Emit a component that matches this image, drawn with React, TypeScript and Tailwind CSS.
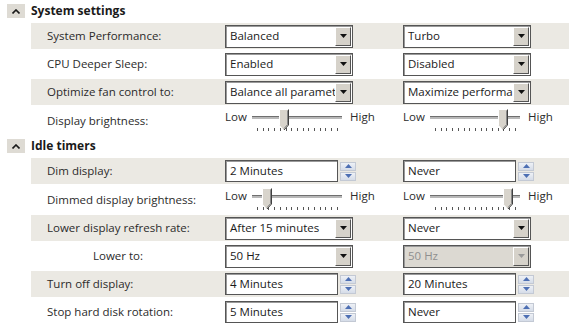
import type { ReactNode } from "react";

// Panel de energia estilo Windows clássico: duas colunas de valores por linha.

function Caret() {
  return (
    <div className="w-[18px] h-[14px] bg-[#dedbd4] flex items-center justify-center">
      <svg width="8" height="5" viewBox="0 0 8 5">
        <path d="M0.5 4.5 L4 1 L7.5 4.5" fill="none" stroke="#1a1a1a" strokeWidth="1.6" />
      </svg>
    </div>
  );
}

function Header({ title }: { title: string }) {
  return (
    <div className="h-[22px] flex items-center pl-[7px] gap-[6px]">
      <Caret />
      <span className="font-bold text-[12px] text-[#1a1a1a]">{title}</span>
    </div>
  );
}

function Row({
  label,
  grey,
  indent,
  tall,
  children,
}: {
  label: string;
  grey?: boolean;
  indent?: boolean;
  tall?: boolean;
  children: ReactNode;
}) {
  return (
    <div className={`ml-[31px] flex ${tall ? "h-[29px] items-start" : "h-[28px] items-center"}`}>
      <div
        className={`flex w-full items-center ${tall ? "h-[29px]" : "h-[26px]"} ${
          grey ? "bg-[#ebe9e3]" : ""
        }`}
      >
        <div
          className={`w-[194px] shrink-0 text-[#2b2b2b] ${indent ? "pl-[62px]" : "pl-[16px]"} ${
            tall ? "pt-[1px]" : ""
          }`}
        >
          {label}
        </div>
        {children}
      </div>
    </div>
  );
}

function Cell({ children }: { children: ReactNode }) {
  return <div className="w-[178px] shrink-0">{children}</div>;
}

function Select({ value, disabled }: { value: string; disabled?: boolean }) {
  return (
    <div
      className={`w-[128px] h-[23px] flex items-center border border-[#555] shadow-[inset_1px_1px_0_#9a9a9a] ${
        disabled ? "bg-[#dcd9d2] text-[#8f8f8f]" : "bg-white text-[#1a1a1a]"
      }`}
    >
      <span className="flex-1 min-w-0 pl-[4px] whitespace-nowrap overflow-hidden">{value}</span>
      <div className="w-[16px] h-[19px] shrink-0 mr-[1px] bg-[#d6d2ca] border border-t-white border-l-white border-b-[#555] border-r-[#555] flex items-center justify-center">
        <svg width="7" height="4" viewBox="0 0 7 4">
          <path d="M0 0 H7 L3.5 4 Z" fill={disabled ? "#9a9a9a" : "#111"} />
        </svg>
      </div>
    </div>
  );
}

function SpinArrow({ up }: { up?: boolean }) {
  return (
    <div className="w-[16px] h-[9px] bg-gradient-to-b from-[#eef1f6] to-[#d5dce8] border border-[#c3c9d4] flex items-center justify-center">
      <svg width="7" height="4" viewBox="0 0 7 4">
        <path d={up ? "M0 4 H7 L3.5 0 Z" : "M0 0 H7 L3.5 4 Z"} fill="#4d6fb3" />
      </svg>
    </div>
  );
}

function Spin({ value }: { value: string }) {
  return (
    <div className="flex items-center gap-[2px]">
      <div className="w-[113px] h-[22px] flex items-center bg-white border border-[#555] shadow-[inset_1px_1px_0_#9a9a9a] pl-[4px] text-[#1a1a1a] whitespace-nowrap">
        {value}
      </div>
      <div className="flex flex-col gap-[1px]">
        <SpinArrow up />
        <SpinArrow />
      </div>
    </div>
  );
}

function Thumb() {
  return (
    <svg width="11" height="22" viewBox="0 0 11 22">
      <path d="M0.5 0.5 H9.5 V16 L5 21 L0.5 16 Z" fill="#d8d4cc" />
      <path d="M0.5 16 V0.5 H9.5" fill="none" stroke="#fff" />
      <path d="M9.5 0.5 V16 L5 21" fill="none" stroke="#404040" />
      <path d="M8.5 1.5 V15.5 L5 19.5" fill="none" stroke="#8a8a8a" />
    </svg>
  );
}

function Slider({ pos }: { pos: number }) {
  return (
    <div className="flex flex-col">
      <div className="flex items-center h-[16px]">
        <span className="w-[27px] text-[#2b2b2b]">Low</span>
        <div className="relative w-[90px] h-[3px] bg-[#b8b8b8] border-t border-[#6f6f6f]">
          <div className="absolute top-[-8px]" style={{ left: pos }}>
            <Thumb />
          </div>
        </div>
        <span className="ml-[8px] text-[#2b2b2b]">High</span>
      </div>
      <div className="ml-[32px] w-[81px] h-[4px] mt-[3px] flex justify-between">
        {Array.from({ length: 15 }).map((_, i) => (
          <div key={i} className="w-[1px] h-[3px] bg-[#555]" />
        ))}
      </div>
    </div>
  );
}

export default function App() {
  return (
    <div className="w-[569px] h-[323px] overflow-hidden bg-white font-['Open_Sans',sans-serif] text-[11.5px] leading-[16px]">
      <Header title="System settings" />
      <Row grey label="System Performance:">
        <Cell><Select value="Balanced" /></Cell>
        <Cell><Select value="Turbo" /></Cell>
      </Row>
      <Row label="CPU Deeper Sleep:">
        <Cell><Select value="Enabled" /></Cell>
        <Cell><Select value="Disabled" /></Cell>
      </Row>
      <Row grey label="Optimize fan control to:">
        <Cell><Select value="Balance all parameters" /></Cell>
        <Cell><Select value="Maximize performance" /></Cell>
      </Row>
      <Row tall label="Display brightness:">
        <Cell><Slider pos={27} /></Cell>
        <Cell><Slider pos={68} /></Cell>
      </Row>
      <Header title="Idle timers" />
      <Row grey label="Dim display:">
        <Cell><Spin value="2 Minutes" /></Cell>
        <Cell><Spin value="Never" /></Cell>
      </Row>
      <Row tall label="Dimmed display brightness:">
        <Cell><Slider pos={10} /></Cell>
        <Cell><Slider pos={73} /></Cell>
      </Row>
      <Row grey label="Lower display refresh rate:">
        <Cell><Select value="After 15 minutes" /></Cell>
        <Cell><Select value="Never" /></Cell>
      </Row>
      <Row indent label="Lower to:">
        <Cell><Select value="50 Hz" /></Cell>
        <Cell><Select value="50 Hz" disabled /></Cell>
      </Row>
      <Row grey label="Turn off display:">
        <Cell><Spin value="4 Minutes" /></Cell>
        <Cell><Spin value="20 Minutes" /></Cell>
      </Row>
      <Row label="Stop hard disk rotation:">
        <Cell><Spin value="5 Minutes" /></Cell>
        <Cell><Spin value="Never" /></Cell>
      </Row>
    </div>
  );
}
